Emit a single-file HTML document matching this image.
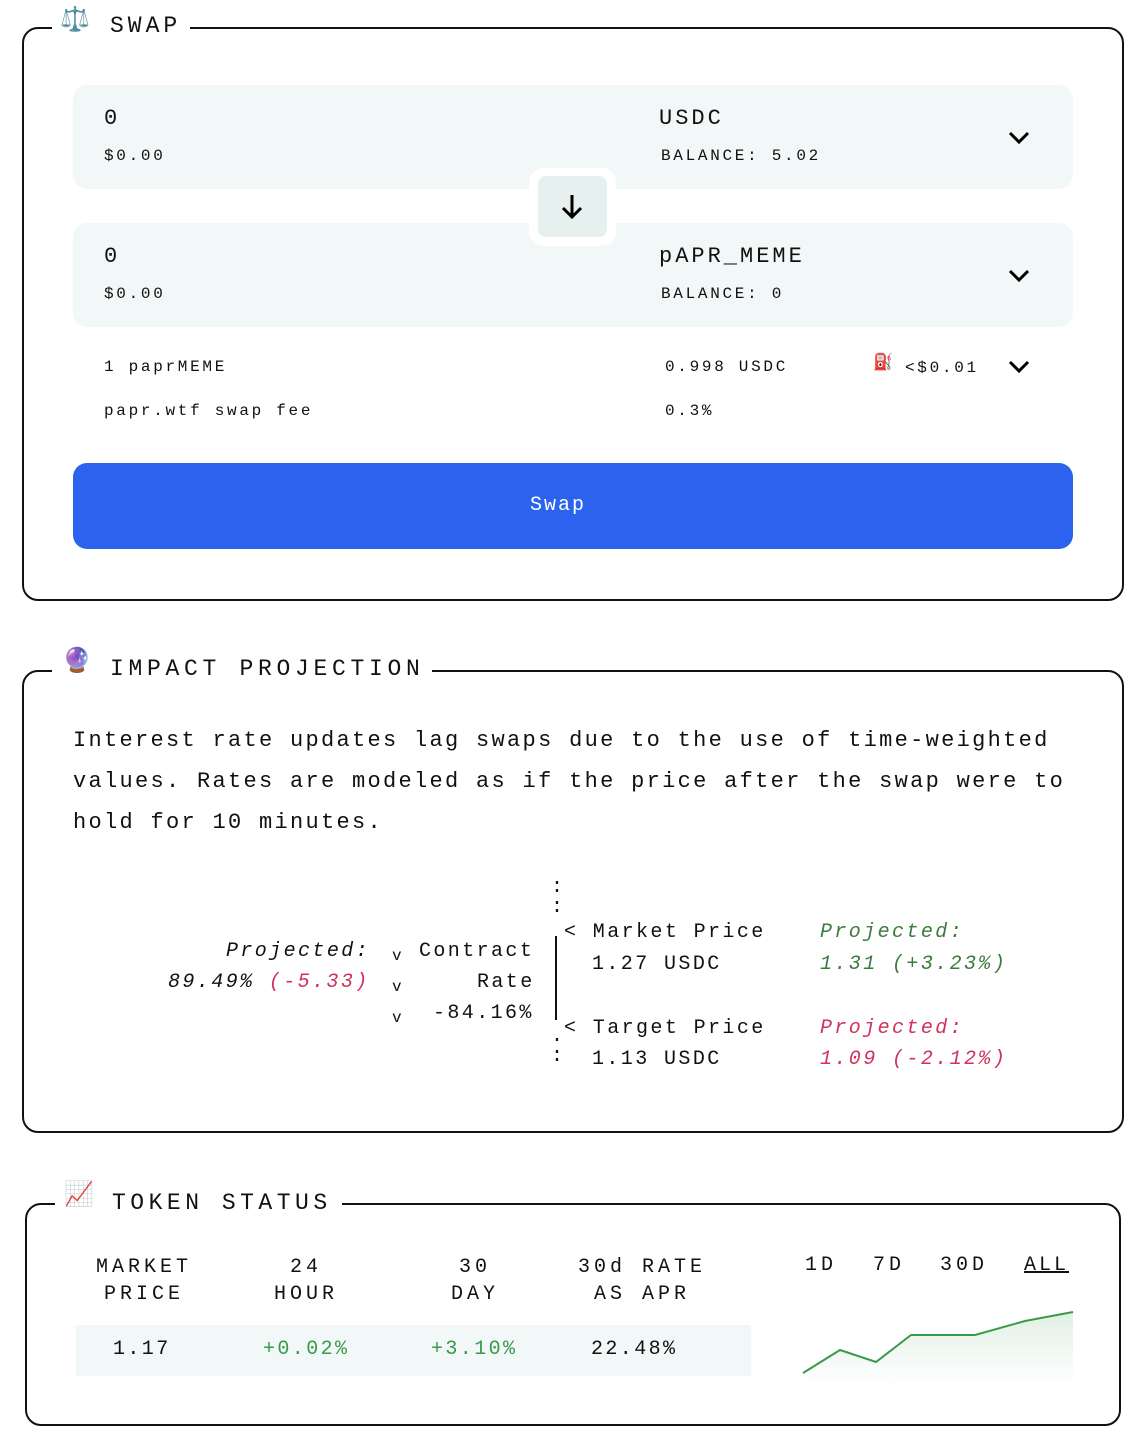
<!DOCTYPE html>
<html><head><meta charset="utf-8"><style>
*{margin:0;padding:0;box-sizing:border-box}
body{width:1148px;height:1450px;background:#fff;position:relative;overflow:hidden;font-family:"Liberation Mono",monospace;color:#111}
.t{position:absolute;white-space:pre;line-height:1}
.box{position:absolute;border:2px solid #111;border-radius:16px}
.leg{position:absolute;background:#fff;height:30px}
.panel{position:absolute;background:#f2f7f7;border-radius:14px}
.s16{font-size:16px;letter-spacing:2.7px}
.s20{font-size:20px;letter-spacing:2.4px}
.s22{font-size:22px;letter-spacing:3px}
.it{font-style:italic}
.red{color:#d1315a}.grn{color:#3e7a3e}.g2{color:#3a9a4a}
</style></head><body>

<!-- SWAP box -->
<div class="box" style="left:22px;top:27px;width:1102px;height:574px"></div>
<div class="leg" style="left:52px;top:12px;width:138px"></div>
<div class="t" style="left:60px;top:10px;font-size:24px">⚖️</div>
<div class="t" style="left:110px;top:15px;font-size:23px;letter-spacing:4px">SWAP</div>

<div class="panel" style="left:73px;top:85px;width:1000px;height:104px"></div>
<div class="t s22" style="left:104px;top:108px">0</div>
<div class="t s16" style="left:104px;top:148px">$0.00</div>
<div class="t s22" style="left:659px;top:108px">USDC</div>
<div class="t s16" style="left:661px;top:148px">BALANCE: 5.02</div>
<svg class="t" style="left:1007px;top:130px" width="24" height="16"><path d="M3 3l9 9 9-9" fill="none" stroke="#000" stroke-width="3"/></svg>

<div class="panel" style="left:73px;top:223px;width:1000px;height:104px"></div>
<div class="t s22" style="left:104px;top:246px">0</div>
<div class="t s16" style="left:104px;top:286px">$0.00</div>
<div class="t s22" style="left:659px;top:246px">pAPR_MEME</div>
<div class="t s16" style="left:661px;top:286px">BALANCE: 0</div>
<svg class="t" style="left:1007px;top:268px" width="24" height="16"><path d="M3 3l9 9 9-9" fill="none" stroke="#000" stroke-width="3"/></svg>

<div style="position:absolute;left:529px;top:168px;width:87px;height:78px;background:#fff;border-radius:14px"></div>
<div style="position:absolute;left:538px;top:176px;width:69px;height:61px;background:#e6f0ee;border-radius:8px"></div>
<svg class="t" style="left:558px;top:192px" width="28" height="30"><path d="M14 3v22M5 16l9 9 9-9" fill="none" stroke="#000" stroke-width="3"/></svg>

<div class="t s16" style="left:104px;top:359px">1 paprMEME</div>
<div class="t s16" style="left:665px;top:359px">0.998 USDC</div>
<div class="t" style="left:873px;top:355px;font-size:16px">⛽</div>
<div class="t s16" style="left:905px;top:360px">&lt;$0.01</div>
<svg class="t" style="left:1007px;top:359px" width="24" height="16"><path d="M3 3l9 9 9-9" fill="none" stroke="#000" stroke-width="3"/></svg>
<div class="t s16" style="left:104px;top:403px">papr.wtf swap fee</div>
<div class="t s16" style="left:665px;top:403px">0.3%</div>

<div style="position:absolute;left:73px;top:463px;width:1000px;height:86px;background:#2b63ee;border-radius:14px"></div>
<div class="t" style="left:58px;width:1000px;text-align:center;top:496px;font-size:20px;letter-spacing:2px;color:#fff">Swap</div>

<!-- IMPACT box -->
<div class="box" style="left:22px;top:670px;width:1102px;height:463px"></div>
<div class="leg" style="left:52px;top:655px;width:380px"></div>
<div class="t" style="left:62px;top:651px;font-size:24px">🔮</div>
<div class="t" style="left:110px;top:658px;font-size:23px;letter-spacing:4.7px">IMPACT PROJECTION</div>

<div class="t" style="left:73px;top:720px;font-size:22px;letter-spacing:2.3px;line-height:41px">Interest rate updates lag swaps due to the use of time-weighted
values. Rates are modeled as if the price after the swap were to
hold for 10 minutes.</div>

<div class="t s20 it" style="left:226px;top:942px">Projected:</div>
<div class="t s20 it" style="left:168px;top:973px">89.49% <span class="red">(-5.33)</span></div>
<div class="t" style="left:392px;top:948px;font-size:16px">v</div>
<div class="t" style="left:392px;top:979px;font-size:16px">v</div>
<div class="t" style="left:392px;top:1010px;font-size:16px">v</div>
<div class="t s20" style="left:419px;top:942px">Contract</div>
<div class="t s20" style="left:477px;top:973px">Rate</div>
<div class="t s20" style="left:433px;top:1004px">-84.16%</div>

<div style="position:absolute;left:555px;top:936px;width:2px;height:84px;background:#111"></div>
<div class="t" style="left:551px;top:878px;font-size:20px;line-height:20px">:<br>:</div>
<div class="t" style="left:551px;top:1027px;font-size:20px;line-height:20px">.<br>:</div>
<div class="t s20" style="left:564px;top:923px">&lt; Market Price</div>
<div class="t s20" style="left:592px;top:955px">1.27 USDC</div>
<div class="t s20" style="left:564px;top:1019px">&lt; Target Price</div>
<div class="t s20" style="left:592px;top:1050px">1.13 USDC</div>
<div class="t s20 it grn" style="left:820px;top:923px">Projected:</div>
<div class="t s20 it grn" style="left:820px;top:955px">1.31 (+3.23%)</div>
<div class="t s20 it red" style="left:820px;top:1019px">Projected:</div>
<div class="t s20 it red" style="left:820px;top:1050px">1.09 (-2.12%)</div>

<!-- TOKEN STATUS -->
<div class="box" style="left:25px;top:1203px;width:1096px;height:223px"></div>
<div class="leg" style="left:55px;top:1188px;width:287px"></div>
<div class="t" style="left:64px;top:1185px;font-size:24px">📈</div>
<div class="t" style="left:112px;top:1192px;font-size:23px;letter-spacing:4.5px">TOKEN STATUS</div>

<div class="t" style="left:84px;width:120px;text-align:center;top:1254px;font-size:20px;letter-spacing:4px;line-height:27px">MARKET<br>PRICE</div>
<div class="t" style="left:246px;width:120px;text-align:center;top:1254px;font-size:20px;letter-spacing:4px;line-height:27px">24<br>HOUR</div>
<div class="t" style="left:415px;width:120px;text-align:center;top:1254px;font-size:20px;letter-spacing:4px;line-height:27px">30<br>DAY</div>
<div class="t" style="left:562px;width:160px;text-align:center;top:1254px;font-size:20px;letter-spacing:4px;line-height:27px">30d RATE<br>AS APR</div>
<div style="position:absolute;left:76px;top:1325px;width:675px;height:51px;background:#f2f7f7"></div>
<div class="t s20" style="left:113px;top:1340px">1.17</div>
<div class="t s20 g2" style="left:263px;top:1340px">+0.02%</div>
<div class="t s20 g2" style="left:431px;top:1340px">+3.10%</div>
<div class="t s20" style="left:591px;top:1340px">22.48%</div>

<div class="t" style="left:805px;top:1256px;font-size:20px;letter-spacing:4px">1D</div>
<div class="t" style="left:873px;top:1256px;font-size:20px;letter-spacing:4px">7D</div>
<div class="t" style="left:940px;top:1256px;font-size:20px;letter-spacing:4px">30D</div>
<div class="t" style="left:1024px;top:1256px;font-size:20px;letter-spacing:3px;text-decoration:underline">ALL</div>
<svg class="t" style="left:800px;top:1305px" width="280" height="85">
<defs><linearGradient id="g" x1="0" y1="0" x2="0" y2="1"><stop offset="0" stop-color="#3a9a4a" stop-opacity=".15"/><stop offset="1" stop-color="#3a9a4a" stop-opacity="0"/></linearGradient></defs>
<path d="M3 68L40 45L76 57L111 30L175 30L225 16L273 7L273 80L3 80Z" fill="url(#g)"/>
<path d="M3 68L40 45L76 57L111 30L175 30L225 16L273 7" fill="none" stroke="#3a9a4a" stroke-width="2"/>
</svg>
</body></html>
